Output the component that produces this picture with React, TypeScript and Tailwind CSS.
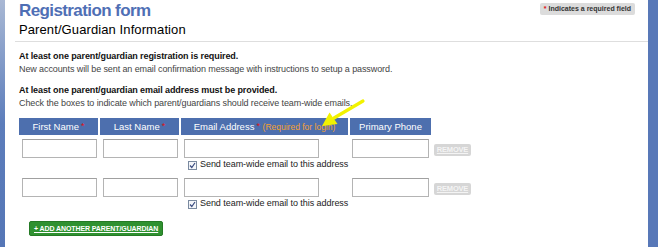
const FONT = { fontFamily: '"Liberation Sans", Arial, sans-serif' }

function Req() {
  return <span className="text-[#e01010] text-[9px] align-top ml-[2px]">*</span>
}

function Field({ w }: { w: string }) {
  return <div className={`h-[19px] border border-[#b4b4b4] border-t-[#a0a0a0] bg-white ${w}`} />
}

function Remove() {
  return (
    <div className="ml-[1px] mt-[5px] w-[37px] h-[12px] rounded-[2px] bg-[#d6d6d6] text-[#f4f4f4] text-[7.5px] font-bold underline leading-[12px] text-center tracking-[-0.2px]">
      REMOVE
    </div>
  )
}

function SendBox() {
  return (
    <div className="col-start-3 col-span-3 flex items-center pl-[7px] h-[14px]">
      <span className="w-[9px] h-[9px] border border-[#7a8aa0] bg-[#f4f6fa] flex items-center justify-center">
        <svg width="7" height="7" viewBox="0 0 7 7">
          <path d="M1 3.5 L2.8 5.5 L6 1" stroke="#3a4c80" strokeWidth="1.2" fill="none" />
        </svg>
      </span>
      <span className="ml-[3px] text-[9px] text-[#222] tracking-[-0.05px]">Send team-wide email to this address</span>
    </div>
  )
}

function Row() {
  return (
    <>
      <div className="pl-[3px] pt-[4px]"><Field w="w-[75px]" /></div>
      <div className="pl-[3px] pt-[4px]"><Field w="w-[75px]" /></div>
      <div className="pl-[3px] pt-[4px]"><Field w="w-[135px]" /></div>
      <div className="pl-[2px] pt-[4px]"><Field w="w-[77px]" /></div>
      <div className="pt-[4px]"><Remove /></div>
      <SendBox />
    </>
  )
}

export default function App() {
  return (
    <div style={FONT} className="w-[658px] h-[247px] flex bg-white overflow-hidden">
      <div className="w-[5px] shrink-0 bg-gradient-to-b from-[#a9b8d4] via-[#5c7dbb] to-[#5576b6]" />
      <div className="flex-1 relative pl-[10px]">
        <div className="flex items-start justify-between">
          <div className="pl-[4px]">
            <h1 className="text-[17px] leading-[22px] font-bold text-[#4f6fb5] tracking-[-0.6px]">Registration form</h1>
            <h2 className="text-[13px] leading-[16px] mt-[0px] text-black tracking-[0.1px]">Parent/Guardian Information</h2>
          </div>
          <div className="mt-[3px] mr-[13px] px-[4px] h-[12px] rounded-[2px] bg-[#dcdcdc] text-[7px] leading-[12px] font-bold text-[#333]">
            <span className="text-[#e01010]">*</span> Indicates a required field
          </div>
        </div>
        <div className="mt-[3px] h-px bg-[#dedede]" />
        <div className="pl-[4px] pt-[8px] text-[9px] leading-[13px]">
          <p className="font-bold text-[#111] tracking-[-0.1px]">At least one parent/guardian registration is required.</p>
          <p className="text-[#444] tracking-[-0.1px]">New accounts will be sent an email confirmation message with instructions to setup a password.</p>
          <p className="font-bold text-[#111] mt-[8px] tracking-[-0.1px]">At least one parent/guardian email address must be provided.</p>
          <p className="text-[#444] tracking-[-0.1px]">Check the boxes to indicate which parent/guardians should receive team-wide emails.</p>
        </div>
        <div className="pl-[4px] mt-[8px] grid grid-cols-[79px_79px_167px_81px_60px] gap-x-[2px]">
          <div className="h-[17px] bg-[#4d6fae] text-white text-[9.5px] leading-[17px] text-center">First Name<Req /></div>
          <div className="h-[17px] bg-[#4d6fae] text-white text-[9.5px] leading-[17px] text-center">Last Name<Req /></div>
          <div className="h-[17px] bg-[#4d6fae] text-white text-[9.5px] leading-[17px] text-center">
            Email Address<Req /> <span className="text-[#f5a030] text-[8.5px]">(Required for login)</span>
          </div>
          <div className="h-[17px] bg-[#4d6fae] text-white text-[9.5px] leading-[17px] text-center">Primary Phone</div>
          <div />
          <Row />
          <div className="col-span-5 h-[2px]" />
          <Row />
        </div>
        <div className="pl-[14px] mt-[3px]">
          <div className="inline-block h-[15px] px-[4px] rounded-[2px] bg-[#2f9130] border border-[#257a25] text-white text-[7px] font-bold underline leading-[13px] tracking-[-0.1px]">
            + ADD ANOTHER PARENT/GUARDIAN
          </div>
        </div>
        <svg className="absolute left-[308px] top-[97px]" width="58" height="34" viewBox="0 0 58 34">
          <path d="M50 4 L21 21" stroke="#f2f200" strokeWidth="3.2" strokeLinecap="round" fill="none" />
          <path d="M9 29 L16.5 15.5 L24.5 27 Z" fill="#f2f200" />
        </svg>
      </div>
      <div className="w-[10px] shrink-0 bg-[#5878b8]" />
    </div>
  )
}
